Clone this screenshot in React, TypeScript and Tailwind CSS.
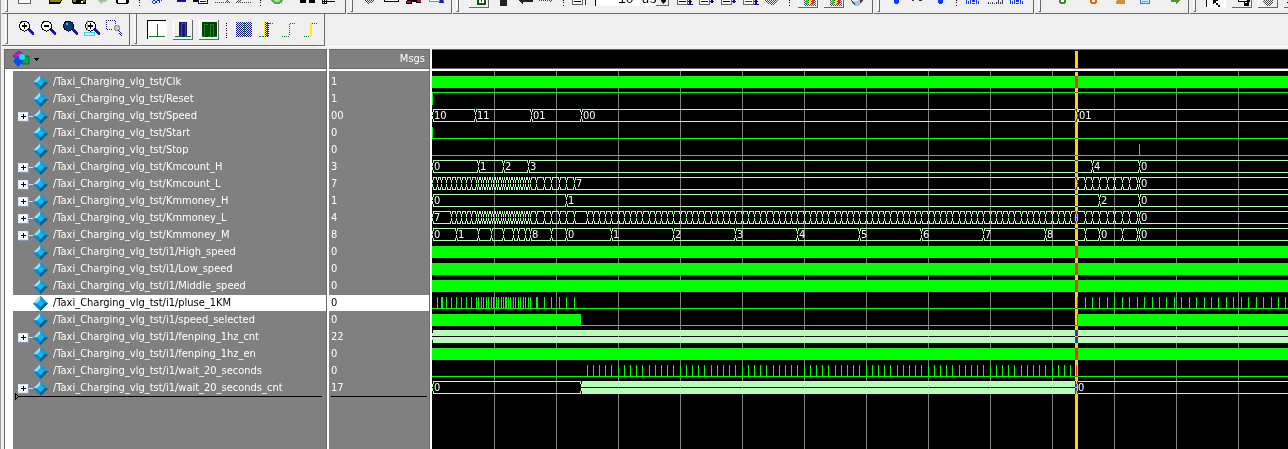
import React, { useState } from 'react'

const FONT = "font-['DejaVu_Sans_Condensed','DejaVu_Sans',sans-serif]"

type Bus = { at: number; label?: string; solid?: boolean }

type Signal = {
  name: string
  value: string
  kind: 'solid' | 'line' | 'bus'
  bus?: Bus[]
  high?: boolean
  pulses?: number[]
  fills?: [number, number][]
}

// Far right end of every trace, the pane clips it
const END = 4000

const KM_FAST = [
  5, 9, 14, 19, 24, 29, 34, 39, 44, 46, 49, 51, 54, 56, 59, 61, 64, 66, 69, 71, 73, 76, 78, 81, 83, 86, 88, 91, 93, 96,
  98, 104, 112, 119, 127, 134, 142,
]
const KM_LATE = [
  645, 653, 660, 667, 675, 682, 690, 697, 705, 712, 720, 727, 734, 742, 749, 757, 764, 772, 779, 786, 794, 801, 809,
  816, 824, 831, 839, 846, 853,
]
const WAIT = Array.from({ length: 80 }, (_, i) => Math.floor(155 + (i * 31) / 5))

const plain = (xs: number[]): Bus[] => xs.map((at) => ({ at }))

const PREFIX = '/Taxi_Charging_vlg_tst/'

const SIGNALS: Signal[] = [
  { name: 'Clk', value: '1', kind: 'solid' },
  { name: 'Reset', value: '1', kind: 'line', high: true, pulses: [0] },
  {
    name: 'Speed',
    value: '00',
    kind: 'bus',
    bus: [
      { at: 0, label: '10' },
      { at: 43, label: '11' },
      { at: 99, label: '01' },
      { at: 149, label: '00' },
      { at: 645, label: '01' },
    ],
  },
  { name: 'Start', value: '0', kind: 'line', pulses: [0] },
  { name: 'Stop', value: '0', kind: 'line', pulses: [707] },
  {
    name: 'Kmcount_H',
    value: '3',
    kind: 'bus',
    bus: [
      { at: 0, label: '0' },
      { at: 46, label: '1' },
      { at: 71, label: '2' },
      { at: 96, label: '3' },
      { at: 660, label: '4' },
      { at: 707, label: '0' },
    ],
  },
  {
    name: 'Kmcount_L',
    value: '7',
    kind: 'bus',
    bus: [
      ...plain([0, ...KM_FAST.slice(0, -1)]),
      { at: 142, label: '7' },
      ...plain(KM_LATE.slice(0, 9)),
      { at: 707, label: '0' },
    ],
  },
  {
    name: 'Kmmoney_H',
    value: '1',
    kind: 'bus',
    bus: [
      { at: 0, label: '0' },
      { at: 134, label: '1' },
      { at: 667, label: '2' },
      { at: 707, label: '0' },
    ],
  },
  {
    name: 'Kmmoney_L',
    value: '4',
    kind: 'bus',
    bus: [
      { at: 0, label: '7' },
      ...plain(KM_FAST.slice(3)),
      ...plain(WAIT),
      ...plain(KM_LATE.slice(1, 9)),
      { at: 707, label: '0' },
    ],
  },
  {
    name: 'Kmmoney_M',
    value: '8',
    kind: 'bus',
    bus: [
      { at: 0, label: '0' },
      { at: 24, label: '1' },
      ...plain([46, 59, 71, 81, 86, 93]),
      { at: 98, label: '8' },
      { at: 119 },
      { at: 134, label: '0' },
      { at: 179, label: '1' },
      { at: 241, label: '2' },
      { at: 303, label: '3' },
      { at: 365, label: '4' },
      { at: 427, label: '5' },
      { at: 489, label: '6' },
      { at: 551, label: '7' },
      { at: 613, label: '8' },
      { at: 653 },
      { at: 667, label: '0' },
      ...plain([690, 705]),
      { at: 707, label: '0' },
    ],
  },
  { name: 'i1/High_speed', value: '0', kind: 'solid' },
  { name: 'i1/Low_speed', value: '0', kind: 'solid' },
  { name: 'i1/Middle_speed', value: '0', kind: 'solid' },
  { name: 'i1/pluse_1KM', value: '0', kind: 'line', pulses: [...KM_FAST, 10, 74, 105, ...KM_LATE] },
  { name: 'i1/speed_selected', value: '0', kind: 'line', fills: [[0, 149], [645, END]] },
  { name: 'i1/fenping_1hz_cnt', value: '22', kind: 'bus', bus: [{ at: 0, solid: true }] },
  { name: 'i1/fenping_1hz_en', value: '0', kind: 'solid' },
  { name: 'i1/wait_20_seconds', value: '0', kind: 'line', pulses: WAIT },
  {
    name: 'i1/wait_20_seconds_cnt',
    value: '17',
    kind: 'bus',
    bus: [{ at: 0, label: '0' }, { at: 149, solid: true }, { at: 644, label: '0' }],
  },
]

const box = (x: number, y: number, w: number, h: number) => `M${x} ${y}h${w}v${h}h${-w}z`

function busPath(bus: Bus[], top: number) {
  let d = ''
  bus.forEach(({ at, solid }, i) => {
    const next = i + 1 < bus.length ? bus[i + 1].at : END
    if (solid) {
      d += box(at + 1, top + 1, next - at - 1, 6) + box(at + 1, top + 8, next - at - 1, 6)
    } else {
      const w = Math.max(next - at - 1, 1)
      d += box(at + 1, top + 1, w, 1) + box(at + 1, top + 13, w, 1)
    }
    // crossing: the outer pixels bend in to a shared stem
    d += box(at + 1, top + 2, 1, 2) + box(at + 1, top + 11, 1, 2)
    d += box(at - 1, top + 2, 1, 2) + box(at - 1, top + 11, 1, 2)
    d += box(at, top + 4, 1, 3) + box(at, top + 8, 1, 3)
  })
  return d
}

function linePath(s: Signal, top: number) {
  let d = box(0, top + (s.high ? 1 : 13), END, 1)
  s.pulses?.forEach((x) => {
    d += box(x, top + 2, 1, 12)
  })
  s.fills?.forEach(([a, b]) => {
    d += box(a, top + 2, b - a, 12)
  })
  return d
}

const Trace: React.FC<{ signal: Signal; top: number }> = ({ signal, top }) => {
  if (signal.kind === 'solid') return <path d={box(0, top + 2, END, 12)} fill="#00ff00" />
  if (signal.kind === 'line') return <path d={linePath(signal, top)} fill="#00ff00" />
  const bus = signal.bus ?? []
  return (
    <g>
      <path d={busPath(bus, top)} fill="#b4ffb4" />
      {bus.map((b) =>
        b.label ? (
          <text key={b.at} x={b.at + 2} y={top + 11} fill="#fff" fontSize={11}>
            {b.label}
          </text>
        ) : null
      )}
    </g>
  )
}

const Diamond = () => (
  <svg width="15" height="15" className="shrink-0">
    <path d="M7.500 0L15 7.500 7.500 15 0 7.500z" fill="#0a78b4" />
    <path d="M7.500 0L0 7.500h4l3.500-3.500z" fill="#8fe4fa" />
    <path d="M7.500 0L15 7.500h-4L7.500 4z" fill="#1e9ad6" />
    <path d="M0 7.500L7.500 15v-4L4 7.500z" fill="#0c86c6" />
    <path d="M15 7.500L7.500 15v-4L11 7.500z" fill="#06587f" />
    <path d="M7.500 4L11 7.500 7.500 11 4 7.500z" fill="#00bff5" />
  </svg>
)

const Expander = () => (
  <button aria-label="Expand" className="flex shrink-0 items-center">
    <svg width="15" height="12" shapeRendering="crispEdges">
      <rect width="11" height="10" y="2" fill="#8795b5" />
      <rect width="10" height="9" y="2" fill="#e4e8f2" />
      <rect width="8" height="7" x="1" y="3" fill="#fafbfd" />
      <path d="M3 6h5v1H3zM5 4h1v5H5z" fill="#000" />
      <path d="M11 6h4v1h-4z" fill="#dde" />
    </svg>
  </button>
)

// Toolbars

type Tool = { label: string; w: number; icon?: React.ReactNode; sep?: boolean }

const sep = (w: number, dots = 'M0 0h1v1H0zM0 2h1v1H0zM0 5h1v1H0z'): Tool => ({
  label: '',
  w,
  sep: true,
  icon: <path d={dots} fill="#000" />,
})

const Dither = () => (
  <defs>
    <pattern id="navyDots" width="2" height="2" patternUnits="userSpaceOnUse">
      <path d="M0 0h1v1H0zM1 1h1v1H1z" fill="#10107a" />
    </pattern>
    <pattern id="grayDots" width="2" height="2" patternUnits="userSpaceOnUse">
      <path d="M0 0h1v1H0zM1 1h1v1H1z" fill="#444" />
    </pattern>
    <pattern id="redDots" width="2" height="2" patternUnits="userSpaceOnUse">
      <path d="M0 0h1v1H0zM1 1h1v1H1z" fill="#f01000" />
    </pattern>
  </defs>
)

const doc = (arrow: React.ReactNode, mark = '#000') => (
  <>
    <path d="M0 0h11v5H0z" fill="#666" />
    <path d="M1 0h9v4H1z" fill="#fff" />
    <path d="M2 1h7v1H2z" fill={mark} />
    {arrow}
  </>
)
const blueDown = <path d="M12 0h2v1h-2zM11 1h4v1h-4zM12 2h2v1h-2z" fill="#0a0a80" />
const blueDownBar = <path d="M12 0h2v4h-2zM11 1h4v1h-4zM11 4h5v1h-5z" fill="#0a0a80" />
const raised = (inner: React.ReactNode) => (
  <>
    <path d="M0 0h20v8H0z" fill="#666" />
    <path d="M0 0h19v7H0z" fill="#fff" />
    <path d="M1 0h18v7H1z" fill="#efefef" />
    {inner}
  </>
)
const columns = (
  <path d="M0 0h1v4H0zM2 1h1v3H2zM4 0h1v4H4zM6 0h3v2H6zM6 3h3v1H6zM10 0h1v4h-1zM12 1h1v3h-1z" fill="#1238f0" />
)
const trafficLight = raised(
  <>
    <path d="M6 0h12v6H6z" fill="url(#grayDots)" />
    <path d="M8 0h2v4H8z" fill="#18d818" />
    <path d="M11 0h2v4h-2z" fill="#ffe000" />
    <path d="M14 0h2v4h-2z" fill="#f02020" />
  </>
)

const FILE_TOOLS: Tool[] = [
  { label: 'New', w: 31, icon: <><path d="M0 0h13v4H0z" fill="#666" /><path d="M1 0h11v3H1z" fill="#fff" /></> },
  { label: 'Open', w: 23, icon: <><path d="M0 0h13l-2 4H0z" fill="#000" /><path d="M1 0h11l-1 2H1z" fill="#8a8a00" /></> },
  { label: 'Save', w: 24, icon: <><path d="M0 0h14v4H1L0 3z" fill="#000" /><path d="M1 0h3v2H1zM11 0h2v2h-2z" fill="#8a8a00" /><path d="M9 1h2v2H9z" fill="#fff" /></> },
  { label: 'Reload', w: 20, icon: <path d="M1 0h10L9 2H6v2L2 1z" fill="#9cc79c" /> },
  { label: 'Print', w: 23, icon: <><path d="M0 0h13v2l-2 2H1L0 3z" fill="#000" /><path d="M2 0h8v3H2z" fill="#fff" /></> },
  sep(13),
  { label: 'Cut', w: 25, icon: <path d="M1 0h2v1H1zM0 1h1v2H0zM3 1h1v2H3zM1 3h2v1H1zM5 0h2v1H5zM7 0h1v3H7zM4 1h1v2H4zM9 0h1v1H9z" fill="#1030e0" /> },
  { label: 'Copy', w: 16, icon: <path d="M0 0h9v2H0z" fill="#10109a" /> },
  { label: 'Paste', w: 22, icon: <><path d="M0 0h5v2H0z" fill="#000" /><path d="M5 0h10v4H5z" fill="#10109a" /><path d="M6 0h8v3H6z" fill="#fff" /><path d="M7 1h6v1H7z" fill="#10109a" /></> },
  { label: 'Undo', w: 21, icon: <path d="M0 2h15v1H0zM11 0h3v2h-3z" fill="url(#grayDots)" /> },
  { label: 'Redo', w: 24, icon: <path d="M0 2h15v1H0zM1 0h4v2H1z" fill="url(#grayDots)" /> },
  sep(11),
  { label: 'Go', w: 29, icon: <><path d="M0 0h12q-1 4-6 4T0 0z" fill="#5aa65a" /><path d="M2 0h8q-2 2-4 2T2 0z" fill="#a8e090" /></> },
  { label: 'Find', w: 22, icon: <path d="M0 0h6v3H0zM9 0h6v3H9z" fill="#000" /> },
  { label: 'Tree', w: 20, icon: <><path d="M0 0h5v4H0zM5 1h8v1H5z" fill="#000" /><path d="M1 0h3v3H1z" fill="#fff" /><path d="M2 0h1v3H2zM1 1h3v1H1z" fill="#000" /></> },
]

const COMPILE_TOOLS: Tool[] = [
  { label: 'Compile', w: 21, icon: <path d="M2 0h9L8 3l-3 1-3-2z" fill="url(#grayDots)" /> },
  { label: 'Compile all', w: 22, icon: <><path d="M0 0h15v2H0z" fill="#000" /><path d="M1 0h13v1H1z" fill="#fff" /></> },
  { label: 'Simulate', w: 23, icon: <><path d="M1 0h14v3h-5V2H6v2H0V2z" fill="#000" /><path d="M1 1h4v2H1zM11 0h4v2h-4z" fill="#c01030" /></> },
  { label: 'Break', w: 18, icon: <><path d="M0 0h15v2H0z" fill="#888" /><path d="M1 0h9v1H1z" fill="#fff" /><path d="M11 0h3v3h-3zM10 2h5v1h-5z" fill="#1020b0" /></> },
]

const RUN_TOOLS: Tool[] = [
  { label: 'Environment', w: 30, icon: raised(<><path d="M8 0h9v5H8z" fill="#0a5a1a" /><path d="M10 0h5v3h-5z" fill="#fff" /><path d="M12 0h1v2h-1z" fill="#0a5a1a" /></>) },
  { label: 'Restart up', w: 19, icon: <path d="M1 0h7v6H1z" fill="#222" /> },
  { label: 'Back', w: 21, icon: <path d="M1 0h14v2H5v2L1 1z" fill="#222" /> },
  { label: 'Forward', w: 24, icon: <path d="M0 0h15l-4 3V1H0z" fill="url(#grayDots)" /> },
  sep(9),
  { label: 'Restart', w: 23, icon: doc(<path d="M13 0h1v5h-1z" fill="#1020c0" />) },
]

const STEP_TOOLS: Tool[] = [
  { label: 'Run', w: 22, icon: doc(blueDownBar) },
  { label: 'Continue run', w: 22, icon: doc(blueDown) },
  { label: 'Run all', w: 22, icon: doc(blueDown) },
  { label: 'Run next', w: 22, icon: doc(blueDownBar, '#a01010') },
  { label: 'Stop', w: 24, icon: <path d="M0 0h13v1l-3 3-3 1-4-1-3-3z" fill="url(#redDots)" /> },
  sep(9),
  { label: 'Performance', w: 26, icon: trafficLight },
  { label: 'Memory', w: 27, icon: trafficLight },
  { label: 'Edit', w: 18, icon: <><path d="M3 1l7-1 2 1-5 5H4z" fill="#a9c4ec" /><path d="M0 0h1l3 4-1 1zM9 0h3L9 3z" fill="#444" /></> },
]

const WAVE_TOOLS: Tool[] = [
  { label: 'Previous', w: 17, icon: <path d="M0 0h5v3H4v1H1V3H0z" fill="#1238f0" /> },
  { label: 'Marks', w: 27, icon: <path d="M1 0h2v1H1zM8 0h3v1H8z" fill="#334" /> },
  { label: 'Next', w: 18, icon: <path d="M0 0h5v3H4v1H1V3H0z" fill="#1238f0" /> },
  sep(10),
  { label: 'Expand time', w: 22, icon: columns },
  { label: 'Expand all', w: 22, icon: <path d="M0 2h1v2H0zM2 3h1v1H2zM4 2h1v2H4zM6 3h1v1H6zM8 2h1v2H8zM10 0h1v4h-1zM12 2h1v2h-1zM14 0h1v4h-1z" fill="#335" /> },
  { label: 'Collapse', w: 21, icon: columns },
]

const BOOKMARK_TOOLS: Tool[] = [
  { label: 'Add bookmark', w: 31, icon: <><path d="M0 0h7v3L5 4H2L0 3z" fill="#3c8a28" /><path d="M2 0h3v2H2z" fill="#fff" /></> },
  { label: 'Delete bookmark', w: 26, icon: <><path d="M0 0h7v3L5 4H2L0 3z" fill="#e06810" /><path d="M2 0h3v2H2z" fill="#fff" /></> },
  { label: 'Jump', w: 24, icon: <path d="M1 0h8v4H0V2z" fill="#cf9238" /> },
  { label: 'Notes', w: 31, icon: <><path d="M0 0h10v4H0z" fill="#3b78c4" /><path d="M1 0h8v3H1z" fill="#dcecff" /><path d="M2 1h6v1H2z" fill="#6db34f" /></> },
  { label: 'Go to', w: 16, icon: <path d="M0 0h10L5 4V2H0z" fill="#4b9a30" /> },
]

const MOUSE_TOOLS: Tool[] = [
  { label: 'Select mode', w: 26, icon: <><path d="M0 0h20v8H0z" fill="#fff" /><path d="M0 0h1v7H0zM7 0h5v1h-2v2h2v2h2v2h-2V5h-2V3H8v1H7z" fill="#000" /></> },
  { label: 'Zoom mode', w: 26, icon: raised(<><path d="M6 0h12v2H6zM12 1h5v5h-5z" fill="#000" /><path d="M7 0h8v1H7zM13 2h2v1h-2z" fill="#fff" /></>) },
  { label: 'Pan mode', w: 26, icon: raised(<path d="M5 0h10v2l-4 4h-2L5 2z" fill="url(#grayDots)" />) },
  { label: 'Cursor mode', w: 20, icon: raised(<path d="M3 2h10v1H3z" fill="#000" />) },
]

const lens = (fill: string, sign: React.ReactNode) => (
  <>
    <path d="M9 10l2-2 5 5v2h-2z" fill="#1414b4" />
    <circle cx="6.500" cy="6" r="5" fill={fill} stroke="#000" />
    {sign}
  </>
)
const plus = <path d="M4 5h5v2H4zM6 3h1v6H6z" fill="#000" />

const ZOOM_TOOLS: Tool[] = [
  { label: 'Zoom in', w: 22, icon: lens('#fff', plus) },
  { label: 'Zoom out', w: 22, icon: lens('#fff', <path d="M4 5h5v2H4z" fill="#000" />) },
  { label: 'Zoom full', w: 22, icon: lens('#0a3c78', <path d="M4 3h2v2H4z" fill="#6fa4d4" />) },
  { label: 'Zoom cursor', w: 22, icon: lens('#fff', <>{plus}<path d="M3 0h1v11H3zM0 12h11v1H0zM0 15h11v1H0zM0 12h1v3H0zM10 12h1v3h-1z" fill="#20e0f0" /></>) },
  { label: 'Zoom range', w: 22, icon: <><path d="M0 0h10v1H0zM0 1h1v9H0zM1 9h5v1H1zM9 1h1v4H9z" fill="url(#navyDots)" /><path d="M9 5h3v1h1v3h-1v1H9V9H8V6h1z" fill="#ccc" stroke="#999" /><path d="M11 10l2-1 3 5v2h-1z" fill="url(#navyDots)" /></> },
]

const shapeButton = (inner: React.ReactNode, pressed = false) => (
  <>
    <path d="M0 0h20v20H0z" fill={pressed ? '#fff' : '#666'} />
    <path d="M0 0h19v19H0z" fill={pressed ? '#000' : '#fff'} />
    <path d="M1 1h18v18H1z" fill={pressed ? '#fff' : '#efefef'} />
    {inner}
  </>
)

const SHAPE_TOOLS: Tool[] = [
  { label: 'Literal', w: 26, icon: shapeButton(<path d="M10 4h1v13h-1zM2 16h16v1H2z" fill="#0a7a2a" />, true) },
  { label: 'Logic', w: 26, icon: shapeButton(<><path d="M6 2h8v15H6z" fill="#1a1a70" /><path d="M2 16h6V3h5v13h5v1h-6V4H9v13H2z" fill="#0a7a2a" /></>) },
  { label: 'Event', w: 27, icon: shapeButton(<><path d="M3 2h15v15H3z" fill="#064006" /><path d="M3 16h2V4h4v12h2V4h4v12h3v1h-4V5h-2v12H9V5H6v12H3z" fill="#0a8a2a" /></>) },
  sep(10, 'M0 3h1v1H0zM0 5h1v1H0zM0 8h1v1H0zM0 10h1v1H0zM0 13h1v1H0zM0 15h1v1H0zM0 17h1v1H0z'),
  { label: 'Range', w: 23, icon: <><path d="M0 2h16v15H0z" fill="url(#navyDots)" /><path d="M8 2h1v15H8z" fill="#0a7a2a" /></> },
  { label: 'Rising edge', w: 23, icon: <><path d="M6 2h4v15H6z" fill="url(#navyDots)" /><path d="M5 2h1v15H5z" fill="#ffee00" /><path d="M0 16h2v1H0zM3 16h2v1H3zM8 3h1v13H8zM10 3h2v1h-2zM13 3h1v1h-1z" fill="#0a7a2a" /></> },
  { label: 'Falling edge', w: 22, icon: <path d="M0 16h1v1H0zM2 16h1v1H2zM4 16h1v1H4zM6 16h1v1H6zM7 14h1v1H7zM7 12h1v1H7zM7 10h1v1H7zM7 8h1v1H7zM7 6h1v1H7zM7 4h1v1H7zM8 3h1v1H8zM10 3h1v1h-1zM12 3h1v1h-1z" fill="#0a7a2a" /> },
  { label: 'Any edge', w: 22, icon: <><path d="M6 3h2v13H6z" fill="#ffee00" /><path d="M0 16h1v1H0zM2 16h1v1H2zM4 16h1v1H4zM8 3h1v1H8zM10 3h1v1h-1zM12 3h1v1h-1z" fill="#0a7a2a" /></> },
]

const Tools: React.FC<{ tools: Tool[] }> = ({ tools }) => (
  <>
    {tools.map((t, i) => {
      const icon = (
        <svg width={t.w} height="20" className="block overflow-visible" shapeRendering="crispEdges">
          {t.icon}
        </svg>
      )
      return t.sep ? (
        <span key={i} className="shrink-0">
          {icon}
        </span>
      ) : (
        <button key={i} aria-label={t.label} className="shrink-0">
          {icon}
        </button>
      )
    })}
  </>
)

const Group: React.FC<{ children: React.ReactNode; className?: string; inner?: string }> = ({
  children,
  className = '',
  inner = '',
}) => (
  <div className={`flex shrink-0 border-r border-b border-[#696969] ${className}`}>
    <span className="mr-[10px] mb-px ml-[3px] w-[3px] shrink-0 border-r border-b border-l border-[#696969] border-l-white" />
    <div className={`flex items-start ${inner}`}>{children}</div>
  </div>
)

const RunLength = () => {
  const [length, setLength] = useState('10 us')
  return (
    <div className="mr-2 flex h-[6px] w-[74px] shrink-0 overflow-hidden">
      <input
        aria-label="Run length"
        value={length}
        onChange={(e) => setLength(e.target.value)}
        className="-mt-2 h-4 w-[61px] border-l border-black bg-white pl-[22px] font-['Liberation_Mono',monospace] text-[13px] leading-4 text-black outline-none"
      />
      <button aria-label="Shorter" className="w-[13px] border-r border-b border-[#696969] bg-[#efefef]">
        <svg width="12" height="5" className="block">
          <path d="M5 0h5v1L7.500 4 5 1z" fill="#000" />
        </svg>
      </button>
    </div>
  )
}

export default function App() {
  const [selected, setSelected] = useState('i1/pluse_1KM')

  return (
    <div className={`flex min-h-screen flex-col overflow-hidden border-l border-[#a0a0a0] bg-[#efefef] text-[11px] ${FONT}`}>
      <svg width="0" height="0" className="absolute">
        <Dither />
      </svg>

      {/* Upper toolbar, only its lower edge is in view */}
      <div className="flex h-[14px] gap-px overflow-hidden pl-px">
        <Group className="w-[344px]"><Tools tools={FILE_TOOLS} /></Group>
        <Group className="w-[105px]"><Tools tools={COMPILE_TOOLS} /></Group>
        <Group className="w-[420px]">
          <Tools tools={RUN_TOOLS} />
          <RunLength />
          <Tools tools={STEP_TOOLS} />
        </Group>
        <Group className="w-40" inner="pl-1"><Tools tools={WAVE_TOOLS} /></Group>
        <Group className="w-[154px]" inner="pl-2"><Tools tools={BOOKMARK_TOOLS} /></Group>
        <Group className="grow"><Tools tools={MOUSE_TOOLS} /></Group>
      </div>

      <div className="flex h-8 gap-px pl-px">
        <Group className="w-32" inner="pt-1.5"><Tools tools={ZOOM_TOOLS} /></Group>
        <Group className="w-[194px]" inner="pt-1.5"><Tools tools={SHAPE_TOOLS} /></Group>
      </div>

      <div className="h-[3px] border-t border-white" />

      <main className="ml-[3px] flex grow border-l border-[#696969] bg-white">
        {/* Signal names */}
        <section className="flex w-[322px] shrink-0 flex-col border-r border-[#696969]">
          <header className="flex h-5 shrink-0 items-center border-y border-[#696969] bg-[#808080] pl-2">
            <button aria-label="Signal menu" className="flex items-center gap-1">
              <svg width="17" height="16">
                <path d="M6 0l5 4-6 5-5-4z" fill="#c818e0" stroke="#70108a" />
                <path d="M9 5h7v8H9z" fill="#10a848" stroke="#0a6a2c" />
                <path d="M5 5l6 5-6 6-5-6z" fill="#0a50e8" />
                <circle cx="9" cy="6" r="3" fill="#10e4fc" />
              </svg>
              <svg width="5" height="3" shapeRendering="crispEdges">
                <path d="M0 0h5v1H0zM1 1h3v1H1zM2 2h1v1H2z" fill="#000" />
              </svg>
            </button>
          </header>
          <ul className="mt-[2px] ml-2 flex grow flex-col gap-px bg-[#808080] pt-[3px]">
            {SIGNALS.map((s) => (
              <li
                key={s.name}
                onClick={() => setSelected(s.name)}
                className={`flex h-4 shrink-0 items-center ${s.name === selected ? 'bg-white text-black' : 'text-white'}`}
              >
                <span className="flex w-5 shrink-0 justify-end">{s.kind === 'bus' && <Expander />}</span>
                <Diamond />
                <span className="ml-[5px] whitespace-nowrap">{PREFIX + s.name}</span>
              </li>
            ))}
            <li className="-mt-1 flex items-center pl-[2px]">
              <svg width="4" height="7" shapeRendering="crispEdges">
                <path d="M0 0h1v7H0zM1 1h1v1H1zM2 2h1v1H2zM3 3h1v1H3zM2 4h1v1H2zM1 5h1v1H1z" fill="#000" />
              </svg>
              <span className="mr-1 h-px grow bg-black" />
            </li>
          </ul>
        </section>

        {/* Values at the cursor */}
        <section className="ml-[2px] flex w-[101px] shrink-0 flex-col border-r border-[#696969]">
          <header className="flex h-5 shrink-0 items-center justify-end border-y border-[#696969] bg-[#808080] pr-1 text-white">
            Msgs
          </header>
          <ul className="mt-[2px] flex grow flex-col gap-px bg-[#808080] pt-[3px]">
            {SIGNALS.map((s) => (
              <li
                key={s.name}
                className={`flex h-4 shrink-0 items-center pl-[2px] ${s.name === selected ? 'bg-white text-black' : 'text-white'}`}
              >
                {s.value}
              </li>
            ))}
            <li className="mx-[2px] -mt-px h-px bg-black" />
          </ul>
        </section>

        {/* Waveforms */}
        <section className="ml-[2px] flex min-w-0 grow flex-col">
          <header className="h-5 shrink-0 border-y border-[#696969] bg-black">
            <svg className="block h-full w-full" shapeRendering="crispEdges">
              <rect x="643" y="1" width="3" height="17" fill="#ffd200" />
            </svg>
          </header>
          <svg className="mt-[2px] block w-full grow bg-black" shapeRendering="crispEdges">
            {Array.from({ length: 40 }, (_, i) => (
              <rect key={i} x={62 * (i + 1)} y="0" width="1" height="100%" fill="#808080" />
            ))}
            {SIGNALS.map((s, i) => (
              <Trace key={s.name} signal={s} top={3 + i * 17} />
            ))}
            <rect x="643" y="1" width="3" height="100%" fill="#ffd200" className="mix-blend-difference" />
          </svg>
        </section>
      </main>
    </div>
  )
}
